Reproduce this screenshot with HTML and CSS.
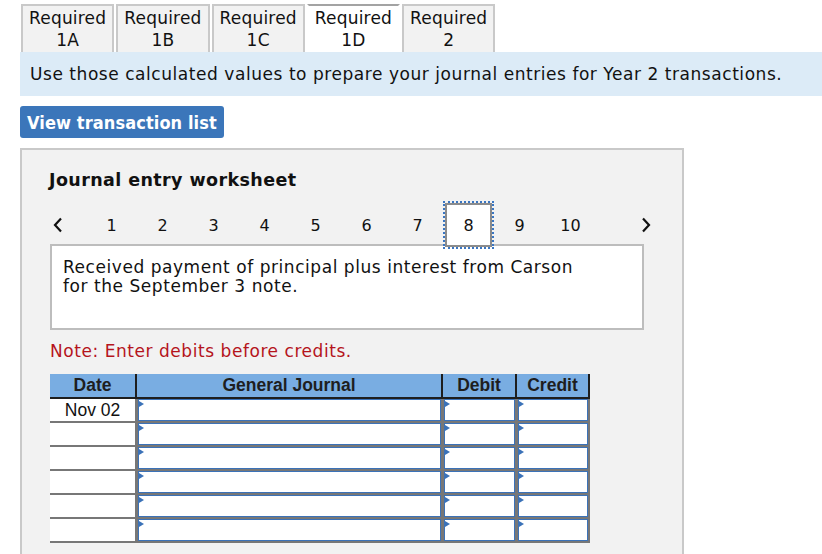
FILE: index.html
```html
<!DOCTYPE html>
<html>
<head>
<meta charset="utf-8">
<link rel="stylesheet" href="styles.css">
</head>
<body>
<div class="tabs">
  <div class="tab">Required<br>1A</div>
  <div class="tab">Required<br>1B</div>
  <div class="tab">Required<br>1C</div>
  <div class="tab active">Required<br>1D</div>
  <div class="tab">Required<br>2</div>
</div>
<div class="info">Use those calculated values to prepare your journal entries for Year 2 transactions.</div>
<div class="btn">View transaction list</div>
<div class="panel">
  <div class="title">Journal entry worksheet</div>
  <div class="nav">
    <span class="arrow left"><svg width="10" height="16" viewBox="0 0 10 16"><polyline points="8,1.5 2,8 8,14.5" fill="none" stroke="#111" stroke-width="2.2"/></svg></span>
    <span class="num">1</span><span class="num">2</span><span class="num">3</span><span class="num">4</span><span class="num">5</span><span class="num">6</span><span class="num">7</span><span class="num cur">8</span><span class="num">9</span><span class="num">10</span>
    <span class="arrow right"><svg width="10" height="16" viewBox="0 0 10 16"><polyline points="2,1.5 8,8 2,14.5" fill="none" stroke="#111" stroke-width="2.2"/></svg></span>
  </div>
  <div class="desc">Received payment of principal plus interest from Carson<br>for the September 3 note.</div>
  <div class="note">Note: Enter debits before credits.</div>
  <div class="grid">
    <div class="hd">Date</div><div class="hd sep">General Journal</div><div class="hd sep">Debit</div><div class="hd sep last">Credit</div>
    <div class="dc">Nov 02</div><div class="ic"><div class="inp"></div></div><div class="ic"><div class="inp"></div></div><div class="ic lastc"><div class="inp"></div></div>
    <div class="dc"></div><div class="ic"><div class="inp"></div></div><div class="ic"><div class="inp"></div></div><div class="ic lastc"><div class="inp"></div></div>
    <div class="dc"></div><div class="ic"><div class="inp"></div></div><div class="ic"><div class="inp"></div></div><div class="ic lastc"><div class="inp"></div></div>
    <div class="dc"></div><div class="ic"><div class="inp"></div></div><div class="ic"><div class="inp"></div></div><div class="ic lastc"><div class="inp"></div></div>
    <div class="dc"></div><div class="ic"><div class="inp"></div></div><div class="ic"><div class="inp"></div></div><div class="ic lastc"><div class="inp"></div></div>
    <div class="dc"></div><div class="ic"><div class="inp"></div></div><div class="ic"><div class="inp"></div></div><div class="ic lastc"><div class="inp"></div></div>
  </div>
</div>
</body>
</html>
```
FILE: styles.css
```css
html, body { margin: 0; padding: 0; background: #fff; }
body { font-family: "DejaVu Sans", Verdana, sans-serif; color: #111; font-size: 17px; letter-spacing: 0.55px; }

.tabs { display: flex; gap: 2px; padding-left: 21px; padding-top: 4px; }
.tab {
  box-sizing: border-box;
  height: 48px;
  padding: 1px 6px 0;
  border: 2px solid #c9c9c9;
  border-bottom: none;
  background: #f2f2f2;
  text-align: center;
  font-size: 17px;
  letter-spacing: 0.2px;
  line-height: 22px;
  color: #111;
}
.tab.active { background: #fff; border-color: #fff; border-top: 2px solid #a3a3a3; }

.info {
  margin-left: 20px;
  height: 44px;
  background: #dcebf7;
  padding-left: 10px;
  display: flex;
  align-items: center;
}

.btn {
  margin: 10px 0 0 20px;
  width: 204px;
  height: 32px;
  box-sizing: border-box;
  background: #3b76ba;
  color: #fff;
  border-radius: 3px;
  font-family: "DejaVu Sans Condensed", "DejaVu Sans", sans-serif;
  font-stretch: condensed;
  font-weight: bold;
  font-size: 18px;
  display: flex;
  align-items: center;
  padding-left: 7px;
  letter-spacing: 0.1px;
}

.panel {
  margin: 10px 0 0 20px;
  width: 664px;
  box-sizing: border-box;
  border: 2px solid #c9c9c9;
  border-bottom: none;
  background: #f2f2f2;
  padding: 19px 0 10px 28px;
  height: 420px;
}
.title { font-weight: bold; font-size: 17.5px; letter-spacing: 0.4px; line-height: 22px; margin-left: -1px; }

.nav { display: flex; align-items: center; height: 44px; margin-top: 12px; letter-spacing: 0; }
.arrow { display: flex; align-items: center; justify-content: center; width: 16px; height: 44px; }
.arrow.left { margin-right: 20px; }
.arrow.right { margin-left: 42px; }
.num { width: 51px; height: 44px; display: flex; align-items: center; justify-content: center; font-size: 16px; box-sizing: border-box; }
.num.cur { width: 47px; margin: 0 2px; background: #fff; border: 2px solid #8c8c8c; outline: 2px dotted #3a76c2; }

.desc {
  box-sizing: border-box;
  width: 594px;
  height: 86px;
  margin-top: -3px;
  background: #fff;
  border: 2px solid #bdbdbd;
  padding: 12px 0 0 11px;
  line-height: 19px;
}

.note { color: #b5141c; margin-top: 10px; line-height: 22px; }

.grid {
  display: grid;
  grid-template-columns: 85px 306px 74px 75px;
  grid-template-rows: 25px;
  grid-auto-rows: 24px;
  margin-top: 12px;
  width: 540px;
  font-family: "Liberation Sans", Arial, sans-serif;
  letter-spacing: 0;
}
.hd {
  background: #79ade2;
  border-bottom: 2px solid #1e1e1e;
  font-weight: bold;
  font-size: 17.5px;
  color: #1e1e1e;
  display: flex;
  align-items: center;
  justify-content: center;
  box-sizing: border-box;
}
.hd.sep { border-left: 2px solid #1e1e1e; }
.hd.last { border-right: 2px solid #1e1e1e; }

.dc {
  background: #fff;
  border-bottom: 2px solid #777;
  font-size: 17.5px;
  display: flex;
  align-items: center;
  justify-content: center;
  box-sizing: border-box;
}
.ic {
  border-left: 3px solid #777;
  border-bottom: 2px solid #777;
  box-sizing: border-box;
}
.ic.lastc { border-right: 2px solid #777; }
.inp {
  height: 100%;
  box-sizing: border-box;
  border: 1px solid #3b72b8;
  background: #fff;
  position: relative;
}
.inp::before {
  content: "";
  position: absolute;
  left: 0;
  top: 1px;
  border-left: 5px solid #3b72b8;
  border-top: 3.5px solid transparent;
  border-bottom: 3.5px solid transparent;
}
```
